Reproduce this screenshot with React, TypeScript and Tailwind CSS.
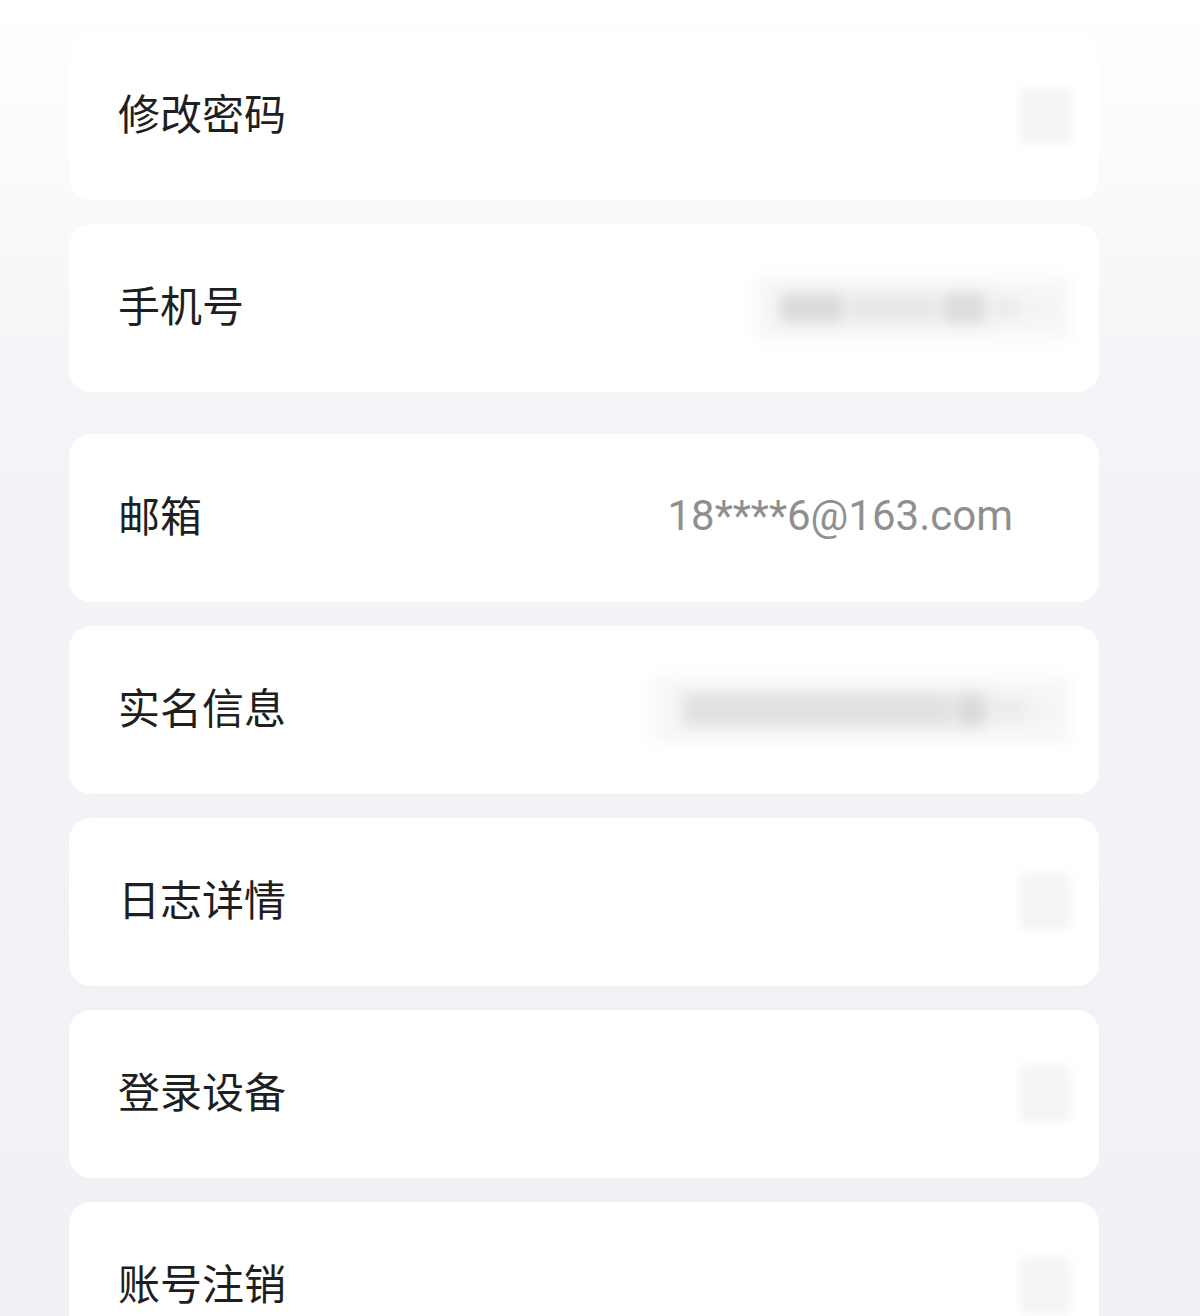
import React from "react";

type Row = {
  label: string;
  kind: "arrow" | "phone" | "email" | "name";
  value?: string;
};

const groups: Row[][] = [
  [
    { label: "修改密码", kind: "arrow" },
    { label: "手机号", kind: "phone" },
  ],
  [
    { label: "邮箱", kind: "email", value: "18****6@163.com" },
    { label: "实名信息", kind: "name" },
    { label: "日志详情", kind: "arrow" },
    { label: "登录设备", kind: "arrow" },
    { label: "账号注销", kind: "arrow" },
  ],
];

function Redacted({ kind }: { kind: Row["kind"] }) {
  if (kind === "arrow") {
    return (
      <div className="w-[50px] h-[56px] mr-[29px] bg-[#f4f4f5] blur-[5px] rounded" />
    );
  }
  if (kind === "phone") {
    // masked phone number, blurred in the source
    return (
      <div className="flex items-center h-[62px] mr-[29px] bg-[#f7f7f8] blur-[7px] pl-[24px] pr-[20px] gap-[6px]">
        <div className="w-[64px] h-[30px] bg-[#dadadc]" />
        <div className="w-[86px] h-[30px] bg-[#e8e8ea]" />
        <div className="w-[44px] h-[30px] bg-[#dcdcde]" />
        <div className="w-[30px] h-[24px] bg-[#ececee]" />
        <div className="w-[22px] h-[20px] bg-[#f2f2f3]" />
      </div>
    );
  }
  if (kind === "name") {
    return (
      <div className="flex items-center h-[66px] mr-[29px] bg-[#f7f7f8] blur-[7px] pl-[30px] pr-[24px] gap-[4px]">
        <div className="w-[270px] h-[34px] bg-[#e1e1e3]" />
        <div className="w-[30px] h-[34px] bg-[#dadadc]" />
        <div className="w-[36px] h-[26px] bg-[#ececee]" />
        <div className="w-[16px] h-[20px] bg-[#f2f2f3]" />
      </div>
    );
  }
  return null;
}

export default function App() {
  return (
    <div
      className="min-h-[1316px] w-[1200px] overflow-hidden bg-gradient-to-b from-white via-[#f3f4f7] via-30% to-[#f0f1f5] pt-[32px]"
      style={{ fontFamily: '"Noto Sans CJK SC", "Noto Sans", sans-serif' }}
    >
      <div className="ml-[69px] w-[1030px] flex flex-col gap-[42px]">
        {groups.map((group, gi) => (
          <div key={gi} className="flex flex-col gap-[24px]">
            {group.map((row) => (
              <div
                key={row.label}
                className="h-[168px] bg-white rounded-[22px] flex items-center justify-between pl-[49px]"
              >
                <span className="text-[42px] leading-none text-[#1f1f1f] mb-[8px]">
                  {row.label}
                </span>
                {row.kind === "email" ? (
                  <span
                    className="text-[42px] leading-none text-[#8f8f8f] mr-[86px] mb-[4px]"
                    style={{ fontFamily: "Roboto, sans-serif" }}
                  >
                    {row.value}
                  </span>
                ) : (
                  <Redacted kind={row.kind} />
                )}
              </div>
            ))}
          </div>
        ))}
      </div>
    </div>
  );
}
